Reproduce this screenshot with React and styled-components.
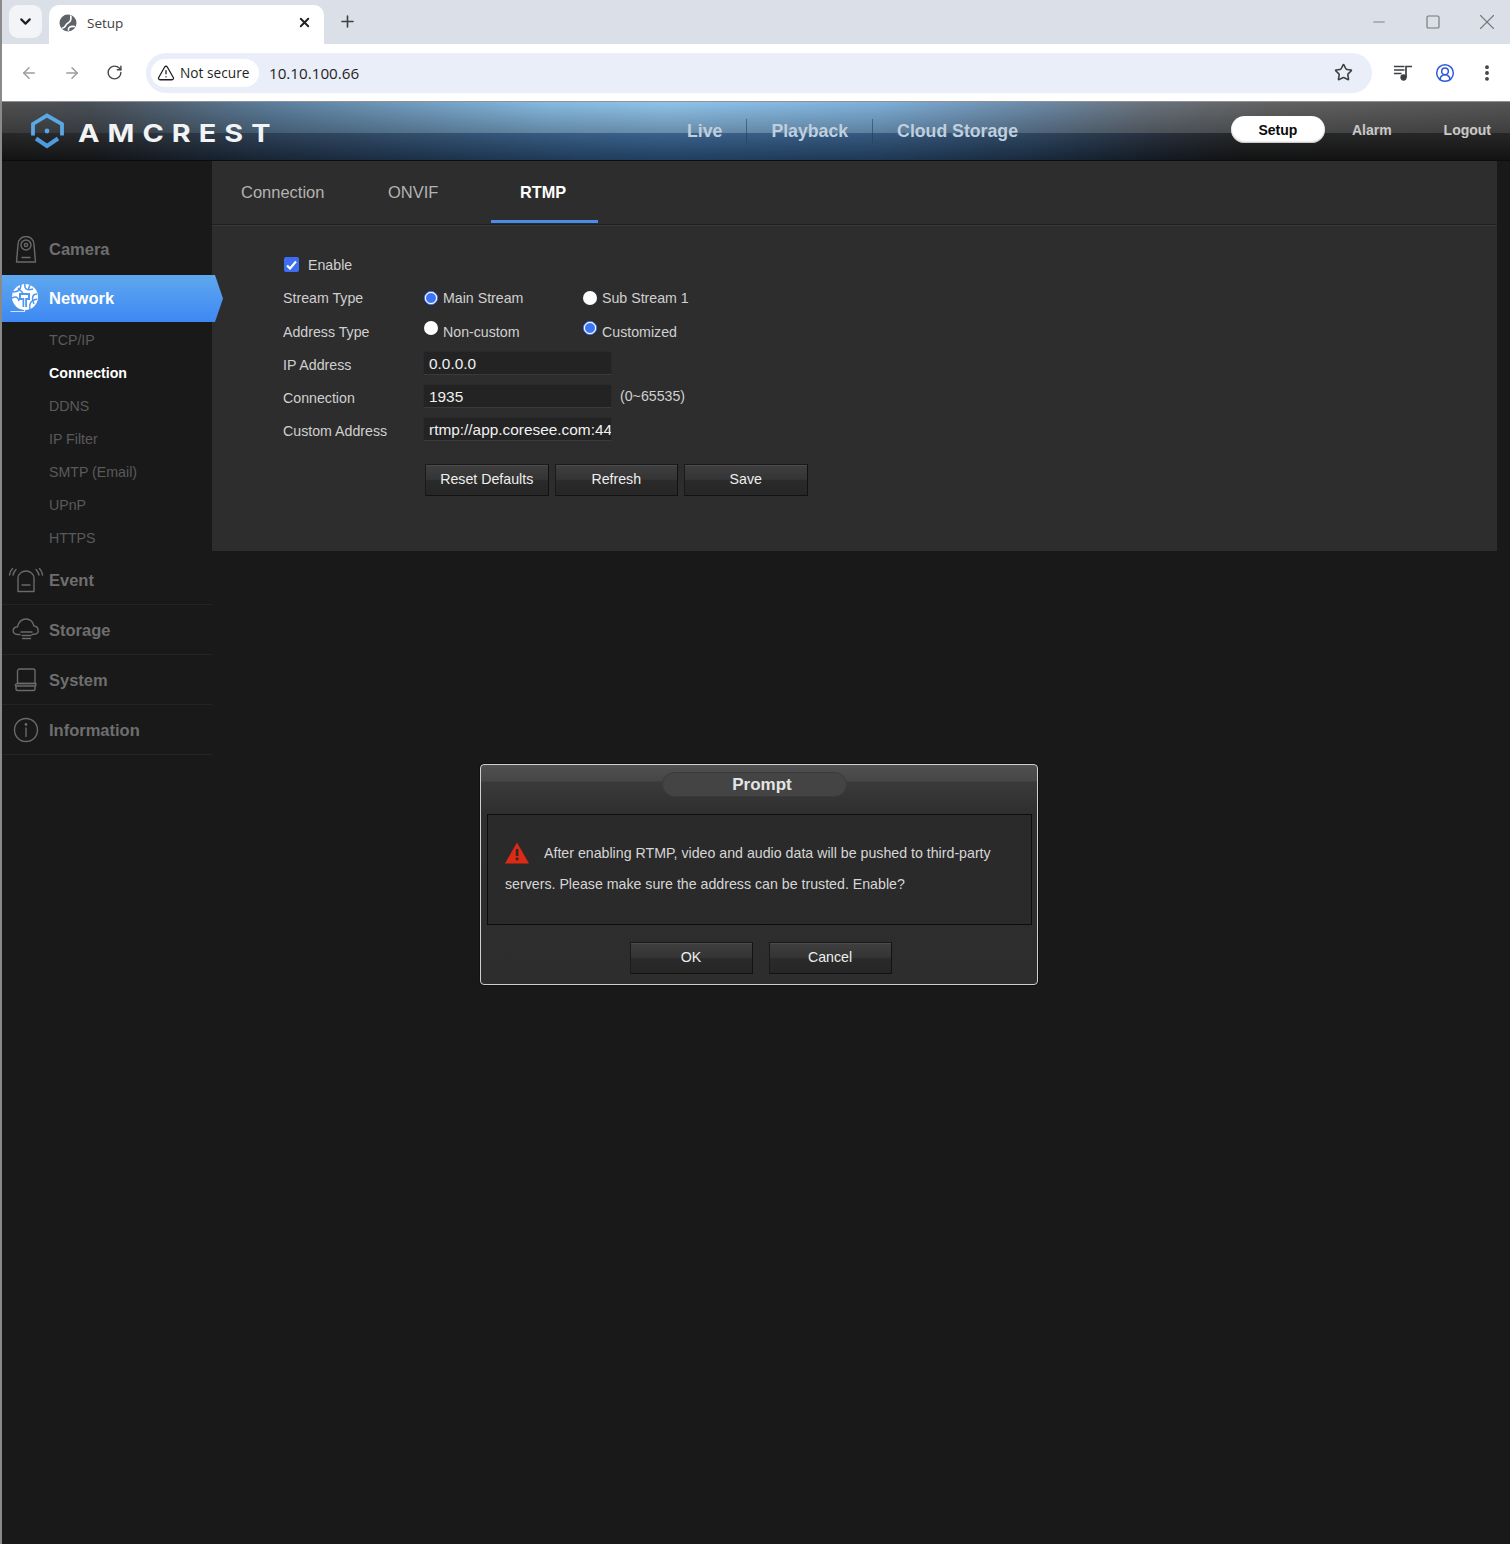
import React from "react";
import styled, { createGlobalStyle } from "styled-components";
import { ArrowLeft, ArrowRight, RotateCw, TriangleAlert, Star, X, Plus, ChevronDown, Minus, Square, EllipsisVertical, CircleUserRound } from "lucide-react";

const Global = createGlobalStyle`
  html, body { margin: 0; padding: 0; background: #191919; }
  * { box-sizing: border-box; }
`;

const Page = styled.div`
  position: relative;
  width: 1510px;
  height: 1544px;
  overflow: hidden;
  background: #191919;
  font-family: "Liberation Sans", Arial, sans-serif;
  border-left: 2px solid #8a8a8a;
`;

/* ---------- Browser chrome ---------- */
const TabStrip = styled.div`
  height: 44px;
  margin-left: -2px;
  background: #dbdfe7;
  display: flex;
  align-items: flex-start;
  padding: 5px 0 0 9px;
  font-family: "Open Sans", sans-serif;
`;
const TabMenu = styled.div`
  width: 33px;
  height: 33px;
  border-radius: 9px;
  background: #f3f4f7;
  display: flex;
  align-items: center;
  justify-content: center;
  color: #1f1f1f;
`;
const BrowserTab = styled.div`
  width: 275px;
  height: 39px;
  margin-left: 7px;
  background: #fff;
  border-radius: 10px 10px 0 0;
  display: flex;
  align-items: center;
  padding: 0 12px 4px 10px;
  color: #3c4043;
  font-size: 13.5px;
`;
const TabTitle = styled.span`
  flex: 1;
  margin-left: 10px;
`;
const NewTab = styled.div`
  margin: 7px 0 0 14px;
  color: #3c4043;
  display: flex;
`;
const WindowButtons = styled.div`
  margin-left: auto;
  height: 34px;
  display: flex;
  align-items: center;
  color: #74777d;
  gap: 8px;
`;
const WindowButton = styled.span`
  width: 46px;
  display: flex;
  justify-content: center;
`;
const Toolbar = styled.div`
  height: 58px;
  background: #fff;
  border-bottom: 1px solid #8f9194;
  display: flex;
  align-items: center;
  padding: 0 0 0 18px;
  font-family: "Open Sans", sans-serif;
`;
const NavIcons = styled.div`
  width: 126px;
  display: flex;
  gap: 25px;
  align-items: center;
`;
const NavIcon = styled.span`
  display: flex;
  color: ${(p) => p.$color};
`;
const Omnibox = styled.div`
  width: 1226px;
  height: 40px;
  border-radius: 20px;
  background: #e9eef8;
  display: flex;
  align-items: center;
  padding: 0 19px 0 5px;
`;
const SecurityChip = styled.div`
  height: 28px;
  width: 108px;
  border-radius: 14px;
  background: #fff;
  display: flex;
  align-items: center;
  gap: 5px;
  padding-left: 6px;
  font-size: 13.7px;
  font-weight: 500;
  color: #1f1f1f;
  white-space: nowrap;
`;
const Url = styled.span`
  flex: 1;
  margin-left: 10px;
  font-size: 15.2px;
  color: #1f1f1f;
`;
const ToolIcons = styled.div`
  display: flex;
  align-items: center;
  margin-left: 21px;
  gap: 22px;
`;

/* ---------- Device header ---------- */
const Header = styled.header`
  position: relative;
  height: 59px;
  display: flex;
  align-items: center;
  background:
    linear-gradient(180deg, rgba(255,255,255,.06) 0, rgba(255,255,255,.06) 52%, rgba(0,0,0,.3) 100%),
    linear-gradient(90deg, #1b1b1b 0, #1c1e21 6%, #22364e 18%, #2d5580 38%, #2f5a87 44%, #2b5079 58%, #233c58 68%, #1c2635 76%, #1a1b1c 82%, #1a1a1a 100%);
  border-bottom: 1px solid #0c0c0c;
  color: #fff;
  &::before {
    content: "";
    position: absolute;
    left: 0;
    right: 0;
    top: 0;
    height: 31px;
    background:
      linear-gradient(180deg, rgba(0,0,0,0) 0, rgba(0,0,0,.28) 100%),
      linear-gradient(90deg, #505050 0, #4a5058 6%, #5d7f9e 18%, #86b9e0 36%, #90c3ea 44%, #7fb0da 58%, #6d8cab 68%, #69727c 76%, #626262 84%, #555 100%);
  }
  > * { position: relative; }
`;
const LogoMark = styled.svg`
  margin-left: 28px;
  flex: none;
`;
const Wordmark = styled.span`
  margin-left: 14px;
  width: 214px;
  font-family: "Inter", sans-serif;
  font-weight: 700;
  font-size: 24px;
  letter-spacing: 6.7px;
  line-height: 1;
  color: #f2f3f4;
  white-space: nowrap;
  padding-top: 6px;
  transform: scaleX(1.2);
  transform-origin: left center;
`;
const MainNav = styled.nav`
  margin-left: 371px;
  display: flex;
  align-items: center;
`;
const MainLink = styled.a`
  font-size: 17.7px;
  font-weight: 700;
  color: #bfcfde;
  padding: 0 24px;
  border-left: ${(p) => (p.$first ? "none" : "1px solid rgba(30,60,90,.55)")};
  line-height: 24px;
`;
const RightNav = styled.div`
  margin-left: auto;
  display: flex;
  align-items: center;
  padding: 0 19px 3px 0;
  font-size: 14px;
  font-weight: 700;
`;
const SetupPill = styled.a`
  width: 94px;
  height: 27px;
  border-radius: 14px;
  background: #fff;
  color: #0b0b0b;
  display: flex;
  align-items: center;
  justify-content: center;
  box-shadow: inset 0 -1px 2px #bbb;
`;
const RightLink = styled.a`
  color: #c9c9c9;
  margin-left: ${(p) => p.$gap}px;
`;

/* ---------- Body ---------- */
const Body = styled.div`
  display: flex;
  align-items: flex-start;
`;
const Sidebar = styled.aside`
  width: 210px;
  flex: none;
  padding-top: 63px;
`;
const MenuRow = styled.div`
  position: relative;
  height: ${(p) => (p.$active ? 47 : 50)}px;
  margin-bottom: ${(p) => (p.$tight ? 1 : 0)}px;
  padding-top: ${(p) => (p.$active ? 0 : 1)}px;
  display: flex;
  align-items: center;
  font-size: 16.5px;
  font-weight: 700;
  color: ${(p) => (p.$active ? "#fff" : "#6e6e6e")};
  border-bottom: ${(p) => (p.$line ? "1px solid #242424" : "none")};
  background: ${(p) => (p.$active ? "linear-gradient(180deg, #5fa8ee 0%, #3e88f4 100%)" : "none")};
  ${(p) => p.$active && `
    width: 221px;
    clip-path: polygon(0 0, 213px 0, 221px 23.5px, 213px 47px, 0 47px);
  `}
`;
const MenuIcon = styled.span`
  width: 47px;
  height: 34px;
  flex: none;
  display: flex;
  align-items: center;
  justify-content: center;
  padding-right: ${(p) => (p.$nudge ? 2 : 0)}px;
`;
const SubList = styled.div`
  padding: 1px 0;
`;
const SubItem = styled.div`
  height: 33px;
  padding-left: 47px;
  display: flex;
  align-items: center;
  font-size: 14.2px;
  font-weight: ${(p) => (p.$active ? 700 : 400)};
  color: ${(p) => (p.$active ? "#fff" : "#5a5a5a")};
`;
const Main = styled.main`
  width: 1285px;
  height: 390px;
  flex: none;
  background: #2d2d2d;
`;
const TabBar = styled.div`
  height: 64px;
  display: flex;
  border-bottom: 1px solid #1f1f1f;
  box-shadow: 0 1px 0 #383838;
`;
const PanelTab = styled.div`
  width: ${(p) => p.$w}px;
  height: 62px;
  padding: ${(p) => (p.$active ? 3 : 1)}px 0 0 ${(p) => p.$p}px;
  display: flex;
  align-items: center;
  font-size: ${(p) => (p.$active ? 16.3 : 16.5)}px;
  font-weight: ${(p) => (p.$active ? 700 : 400)};
  color: ${(p) => (p.$active ? "#fff" : "#b3b3b3")};
  border-bottom: ${(p) => (p.$active ? "3px solid #4a8ce8" : "none")};
`;
const Form = styled.div`
  padding: 23px 0 0 71px;
  display: grid;
  grid-template-columns: 141px 159px 1fr;
  grid-auto-rows: 33px;
  font-size: 14.2px;
  color: #d0d0d0;
  align-items: center;
`;
const CheckCell = styled.label`
  grid-column: 1 / -1;
  display: flex;
  align-items: center;
  gap: 9px;
`;
const CheckBox = styled.span`
  width: 15px;
  height: 15px;
  margin-left: 1px;
  border-radius: 2px;
  background: #3d6df0;
  display: flex;
  align-items: center;
  justify-content: center;
`;
const RowLabel = styled.span`
  padding-top: ${(p) => (p.$low ? 3 : 1)}px;
`;
const RadioCell = styled.label`
  display: flex;
  align-items: center;
  gap: 5px;
`;
const Radio = styled.span`
  width: 14px;
  height: 14px;
  margin: ${(p) => (p.$raised ? "-5px 0 0 0" : "0")};
  border-radius: 50%;
  background: #fff;
  flex: none;
  border: ${(p) => (p.$on ? "1.5px solid #3d74f2" : "none")};
  position: relative;
  ${(p) => p.$on && `
    &::after {
      content: "";
      position: absolute;
      inset: 0;
      border-radius: 50%;
      background: #3d74f2;
      border: 1px solid #fff;
    }
  `}
`;
const RadioText = styled.span`
  padding-top: ${(p) => (p.$low ? 3 : 1)}px;
`;
const FieldCell = styled.div`
  grid-column: 2 / -1;
  display: flex;
  align-items: center;
  gap: 8px;
  margin: -1px 0 0 -1px;
`;
const Field = styled.div`
  width: 189px;
  height: 24px;
  background: #232323;
  border: 1px solid #2a2a2a;
  border-bottom-color: #3a3a3a;
  padding: 0 0 0 5px;
  font-size: 15.4px;
  line-height: 24px;
  color: #f0f0f0;
  overflow: hidden;
  white-space: nowrap;
`;
const Hint = styled.span`
  font-size: 14.2px;
`;
const ButtonRow = styled.div`
  grid-column: 2 / -1;
  display: flex;
  gap: 6px;
  margin: 34px 0 0 1px;
  height: 32px;
`;
const Button = styled.button`
  width: ${(p) => p.$w}px;
  height: 32px;
  padding: 0 0 2px;
  border: 1px solid #121212;
  border-top-color: #1a1a1a;
  border-left-color: #1a1a1a;
  background: linear-gradient(180deg, #3f3f3f 0%, #343434 48%, #2a2a2a 52%, #262626 100%);
  color: #eee;
  font-family: inherit;
  font-size: 14.2px;
  box-shadow: inset 0 1px 0 #4a4a4a;
`;

/* ---------- Prompt ---------- */
const Dialog = styled.div`
  position: absolute;
  left: 478px;
  top: 764px;
  width: 558px;
  height: 221px;
  border: 1px solid #cfcfcf;
  border-radius: 4px;
  background: linear-gradient(180deg, #505050 0, #464646 16px, #3a3a3a 17px, #2e2e2e 50px, #2d2d2d 100%);
  padding: 7px 5px 0 6px;
  display: flex;
  flex-direction: column;
  box-shadow: 0 0 0 1px #111;
`;
const DialogTitle = styled.div`
  align-self: flex-start;
  margin-left: 175px;
  width: 185px;
  height: 25px;
  padding-left: 15px;
  border-radius: 13px;
  background: #444;
  border: 1px solid #3a3a3a;
  display: flex;
  align-items: center;
  justify-content: center;
  font-size: 17px;
  font-weight: 700;
  color: #e4e4e4;
`;
const DialogBody = styled.div`
  margin-top: 17px;
  height: 111px;
  border: 1px solid #0c0c0c;
  background: #2a2a2a;
  padding: 23px 17px 0;
  font-size: 14.2px;
  line-height: 31px;
  color: #d6d6d6;
`;
const WarnIcon = styled.svg`
  vertical-align: -6px;
  margin-right: 15px;
`;
const DialogActions = styled.div`
  margin-top: 17px;
  display: flex;
  justify-content: center;
  gap: 16px;
  padding-left: 2px;
`;

const stroke = { fill: "none", stroke: "#6a6a6a", strokeWidth: 1.4, strokeLinecap: "round", strokeLinejoin: "round" };

const CameraIcon = () => (
  <svg width="22" height="28" viewBox="0 0 22 28" {...stroke}>
    <path d="M3 8.5 A8 8 0 0 1 19 8.5 L20.5 26 H1.5 Z" />
    <circle cx="11" cy="9" r="5" />
    <circle cx="11" cy="9" r="1.6" />
    <path d="M7 21.5 H15" />
  </svg>
);
const NetworkIcon = () => (
  <svg width="30" height="30" viewBox="0 0 30 30">
    <circle cx="15" cy="13" r="13" fill="#fff" />
    <g fill="none" stroke="#4f97f0" strokeWidth="1.5">
      <path d="M3 8 C8 8 11 5 11 0" />
      <path d="M15 0 C14 5 17 7 23 5" />
      <path d="M27 10 C23 10 21 13 24 20" />
      <path d="M2 14 C6 12 8 13 9 17" />
      <path d="M20 25 C19 20 20 17 27 15" />
      <path d="M8 4 L13 9" />
      <path d="M20 1 L18 6" />
    </g>
    <path d="M9 9 H20 V16 H17 V23 H12.500 V16 H9 Z" fill="#4f97f0" />
    <path d="M11 11 H18 V14 H15.200 V27 C15.200 27.500 14.500 28 13.500 28 H0.500 V27.200 H13 C14 27.200 14.200 27 14.200 26.500 V14 H11 Z" fill="#fff" />
  </svg>
);
const EventIcon = () => (
  <svg width="36" height="26" viewBox="0 0 36 26" {...stroke}>
    <path d="M10 24.5 V11 C10 7 14 4 18 4 C22 4 26 7 26 11 V24.5 Z" />
    <path d="M14 18 H22" />
    <path d="M5 8 C5.5 6 6.5 4 8 2.5" />
    <path d="M1.5 8 C2 5.5 3 3 4.5 1.5" />
    <path d="M31 8 C30.5 6 29.5 4 28 2.5" />
    <path d="M34.5 8 C34 5.5 33 3 31.500 1.500" />
  </svg>
);
const StorageIcon = () => (
  <svg width="28" height="24" viewBox="0 0 28 24" {...stroke}>
    <path d="M8 16.500 H5.500 C-0.500 16.500 0 9 5.500 8.700 C7 3 10.500 1 14 1 C18 1 21 4 22 8 C27 8.500 27.500 15 23.500 16 L20 16.500" />
    <path d="M9 14 H20" />
    <path d="M10 17.500 H19" />
    <path d="M10.500 20.500 H18.500" />
  </svg>
);
const SystemIcon = () => (
  <svg width="24" height="24" viewBox="0 0 24 24" {...stroke}>
    <path d="M3.500 15.500 V3 C3.500 2 4.500 1 5.500 1 H19.500 C20.500 1 21 2 21 3 V15.500 Z" />
    <path d="M3.500 15.500 H22 L21.500 18 H2 C1 18 1 16 3.500 15.500 Z" />
    <path d="M2 18 V21 C2 22 3 22.500 4 22.500 H19 C20.500 22.500 21 22 21 21 V18" />
  </svg>
);
const InfoIcon = () => (
  <svg width="26" height="26" viewBox="0 0 26 26" {...stroke}>
    <circle cx="13" cy="13" r="11.500" />
    <circle cx="13" cy="7.500" r="0.700" />
    <path d="M13 11 V19.500" />
  </svg>
);

const network = ["TCP/IP", "Connection", "DDNS", "IP Filter", "SMTP (Email)", "UPnP", "HTTPS"];

export default function App() {
  return (
    <Page>
      <Global />
      <TabStrip>
        <TabMenu><ChevronDown size={17} strokeWidth={3} /></TabMenu>
        <BrowserTab>
          <svg width="18" height="18" viewBox="0 0 18 18">
            <circle cx="9" cy="9" r="8.500" fill="#5f6368" />
            <g fill="none" stroke="#fff" strokeWidth="1.700" strokeLinecap="round">
              <path d="M3.500 14 C7 14 6 10.500 9 9 C11 8 12.500 6 11.800 2" />
              <path d="M9.500 16 C9 13.500 11 12 15.500 12.500" />
            </g>
          </svg>
          <TabTitle>Setup</TabTitle>
          <X size={15} strokeWidth={3} color="#1f1f1f" />
        </BrowserTab>
        <NewTab><Plus size={19} strokeWidth={2} /></NewTab>
        <WindowButtons>
          <WindowButton><Minus size={18} strokeWidth={1.200} /></WindowButton>
          <WindowButton><Square size={16} strokeWidth={1.700} /></WindowButton>
          <WindowButton><X size={26} strokeWidth={1} /></WindowButton>
        </WindowButtons>
      </TabStrip>
      <Toolbar>
        <NavIcons>
          <NavIcon $color="#9a9da2"><ArrowLeft size={18} strokeWidth={2} /></NavIcon>
          <NavIcon $color="#9a9da2"><ArrowRight size={18} strokeWidth={2} /></NavIcon>
          <NavIcon $color="#474747"><RotateCw size={17} strokeWidth={2} /></NavIcon>
        </NavIcons>
        <Omnibox>
          <SecurityChip>
            <TriangleAlert size={18} strokeWidth={1.700} />
            <span>Not secure</span>
          </SecurityChip>
          <Url>10.10.100.66</Url>
          <Star size={19} strokeWidth={2} color="#3c4043" />
        </Omnibox>
        <ToolIcons>
          <svg width="20" height="20" viewBox="0 0 20 20" fill="none" stroke="#3c4043" strokeWidth="1.700">
            <path d="M1 3.500 H11.500 M1 7 H11.500 M1 10.500 H8.500" />
            <path d="M13 14.500 V3.500 H19" />
            <circle cx="10.500" cy="14.500" r="2.300" fill="#3c4043" />
          </svg>
          <CircleUserRound size={20} strokeWidth={1.800} color="#2f5bd7" />
          <EllipsisVertical size={20} strokeWidth={2.600} color="#3c4043" />
        </ToolIcons>
      </Toolbar>

      <Header>
        <LogoMark width="34" height="36" viewBox="0 0 34 36">
          <path d="M3 22.500 V11 L17 2.500 L32 11 V22.500" fill="none" stroke="#5aa8e6" strokeWidth="3.800" />
          <path d="M6 25.500 L17 33 L28 25.500" fill="none" stroke="#4e9be0" strokeWidth="4.200" />
          <circle cx="17" cy="18" r="2.400" fill="#5aa5e6" />
        </LogoMark>
        <Wordmark>AMCREST</Wordmark>
        <MainNav>
          <MainLink $first>Live</MainLink>
          <MainLink>Playback</MainLink>
          <MainLink>Cloud Storage</MainLink>
        </MainNav>
        <RightNav>
          <SetupPill>Setup</SetupPill>
          <RightLink $gap={27}>Alarm</RightLink>
          <RightLink $gap={52}>Logout</RightLink>
        </RightNav>
      </Header>

      <Body>
        <Sidebar>
          <MenuRow $tight>
            <MenuIcon><CameraIcon /></MenuIcon>
            Camera
          </MenuRow>
          <MenuRow $active>
            <MenuIcon $nudge><NetworkIcon /></MenuIcon>
            Network
          </MenuRow>
          <SubList>
            {network.map((n) => (
              <SubItem key={n} $active={n === "Connection"}>{n}</SubItem>
            ))}
          </SubList>
          <MenuRow $line>
            <MenuIcon><EventIcon /></MenuIcon>
            Event
          </MenuRow>
          <MenuRow $line>
            <MenuIcon><StorageIcon /></MenuIcon>
            Storage
          </MenuRow>
          <MenuRow $line>
            <MenuIcon><SystemIcon /></MenuIcon>
            System
          </MenuRow>
          <MenuRow $line>
            <MenuIcon><InfoIcon /></MenuIcon>
            Information
          </MenuRow>
        </Sidebar>
        <Main>
          <TabBar>
            <PanelTab $w={147} $p={29}>Connection</PanelTab>
            <PanelTab $w={132} $p={29}>ONVIF</PanelTab>
            <PanelTab $w={107} $p={29} $active>RTMP</PanelTab>
          </TabBar>
          <Form>
            <CheckCell>
              <CheckBox>
                <svg width="11" height="10" viewBox="0 0 11 10"><path d="M1 5.500 L4 8.500 L10 1.500" fill="none" stroke="#fff" strokeWidth="2.200" /></svg>
              </CheckBox>
              Enable
            </CheckCell>
            <RowLabel>Stream Type</RowLabel>
            <RadioCell><Radio $on /><RadioText>Main Stream</RadioText></RadioCell>
            <RadioCell><Radio /><RadioText>Sub Stream 1</RadioText></RadioCell>
            <RowLabel $low>Address Type</RowLabel>
            <RadioCell><Radio $raised /><RadioText $low>Non-custom</RadioText></RadioCell>
            <RadioCell><Radio $raised $on /><RadioText $low>Customized</RadioText></RadioCell>
            <RowLabel $low>IP Address</RowLabel>
            <FieldCell><Field>0.0.0.0</Field></FieldCell>
            <RowLabel $low>Connection</RowLabel>
            <FieldCell><Field>1935</Field><Hint>(0~65535)</Hint></FieldCell>
            <RowLabel $low>Custom Address</RowLabel>
            <FieldCell><Field>rtmp://app.coresee.com:44</Field></FieldCell>
            <span />
            <ButtonRow>
              <Button $w={123.5}>Reset Defaults</Button>
              <Button $w={123.5}>Refresh</Button>
              <Button $w={123.5}>Save</Button>
            </ButtonRow>
          </Form>
        </Main>
      </Body>

      <Dialog>
        <DialogTitle>Prompt</DialogTitle>
        <DialogBody>
          <WarnIcon width="24" height="22" viewBox="0 0 24 22">
            <path d="M12 0.500 L24 21.500 H0 Z" fill="#dc2a16" />
            <rect x="10.800" y="7" width="2.600" height="7" fill="#2a2a2a" />
            <rect x="10.800" y="15.500" width="2.600" height="2.800" fill="#2a2a2a" />
          </WarnIcon>
          After enabling RTMP, video and audio data will be pushed to third-party servers. Please make sure the address can be trusted. Enable?
        </DialogBody>
        <DialogActions>
          <Button $w={123}>OK</Button>
          <Button $w={123}>Cancel</Button>
        </DialogActions>
      </Dialog>
    </Page>
  );
}
